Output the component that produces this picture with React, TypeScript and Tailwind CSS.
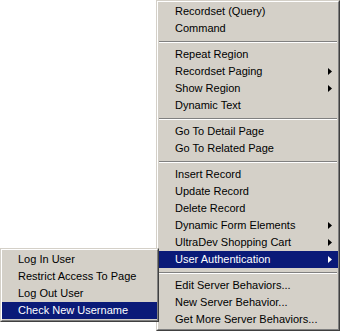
type Entry = { label: string; sub?: boolean; active?: boolean } | "sep";

const mainItems: Entry[] = [
  { label: "Recordset (Query)" },
  { label: "Command" },
  "sep",
  { label: "Repeat Region" },
  { label: "Recordset Paging", sub: true },
  { label: "Show Region", sub: true },
  { label: "Dynamic Text" },
  "sep",
  { label: "Go To Detail Page" },
  { label: "Go To Related Page" },
  "sep",
  { label: "Insert Record" },
  { label: "Update Record" },
  { label: "Delete Record" },
  { label: "Dynamic Form Elements", sub: true },
  { label: "UltraDev Shopping Cart", sub: true },
  { label: "User Authentication", sub: true, active: true },
  "sep",
  { label: "Edit Server Behaviors..." },
  { label: "New Server Behavior..." },
  { label: "Get More Server Behaviors..." },
];

const subItems: Entry[] = [
  { label: "Log In User" },
  { label: "Restrict Access To Page" },
  { label: "Log Out User" },
  { label: "Check New Username", active: true },
];

function Arrow({ light }: { light?: boolean }) {
  return (
    <svg width="4" height="7" viewBox="0 0 4 7" className="shrink-0">
      <path d="M0 0 L4 3.5 L0 7 Z" fill={light ? "#ffffff" : "#000000"} />
    </svg>
  );
}

function MenuList({ items, pad }: { items: Entry[]; pad: string }) {
  return (
    <div className="flex flex-col py-[1px]">
      {items.map((item, i) =>
        item === "sep" ? (
          <div key={i} className="flex h-[9px] flex-col justify-center px-[1px]">
            <div className="h-[1px] bg-[#808080]" />
            <div className="h-[1px] bg-white" />
          </div>
        ) : (
          <div
            key={i}
            className={
              "flex h-[17px] items-center justify-between pr-[6px] " +
              pad +
              (item.active ? " bg-[#0a1a78] text-white" : " text-black")
            }
          >
            <span className="whitespace-nowrap">{item.label}</span>
            {item.sub && <Arrow light={item.active} />}
          </div>
        ),
      )}
    </div>
  );
}

function Menu({ items, pad, className }: { items: Entry[]; pad: string; className?: string }) {
  return (
    <div
      className={
        "border border-t-[#d4d0c8] border-l-[#d4d0c8] border-r-[#404040] border-b-[#404040] bg-[#d4d0c8] " +
        (className ?? "")
      }
    >
      <div className="border border-t-white border-l-white border-r-[#808080] border-b-[#808080]">
        <MenuList items={items} pad={pad} />
      </div>
    </div>
  );
}

export default function App() {
  return (
    <div
      className="relative h-[331px] w-[341px] overflow-hidden bg-white text-[11px] leading-none"
      style={{ fontFamily: '"Liberation Sans", Arial, sans-serif' }}
    >
      <div className="flex">
        <Menu items={mainItems} pad="pl-[17px]" className="ml-[156px] h-[331px] w-[184px]" />
      </div>
      <Menu items={subItems} pad="pl-[16px]" className="absolute left-0 top-[248px] w-[159px]" />
    </div>
  );
}
